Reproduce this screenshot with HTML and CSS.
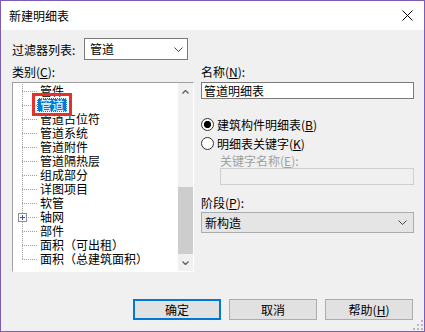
FILE: index.html
```html
<!DOCTYPE html>
<html lang="zh-CN">
<head>
    <meta charset="UTF-8">
    <title>新建明细表</title>
    <link rel="stylesheet" href="styles.css">
</head>
<body>
    <div class="dialog">
        <div class="titlebar">
            <span class="title">新建明细表</span>
            <svg class="close" width="11" height="11" viewBox="0 0 11 11">
                <path d="M0.5 0.5 L10.5 10.5 M10.5 0.5 L0.5 10.5" stroke="#000" stroke-width="1" fill="none"/>
            </svg>
        </div>

        <div class="content">
            <div class="filter-row">
                <span class="filter-label">过滤器列表:</span>
                <div class="select filter-select">
                    <span>管道</span>
                    <svg class="chevron" width="9" height="5" viewBox="0 0 9 5"><path d="M0.5 0.5 L4.5 4.5 L8.5 0.5" stroke="#444" fill="none"/></svg>
                </div>
            </div>

            <div class="main">
                <div class="left">
                    <div class="field-label">类别(<u>C</u>):</div>
                    <div class="listbox">
                        <ul class="tree">
                            <li class="row"><span class="branch"></span><span class="item">管件</span></li>
                            <li class="row"><span class="branch"></span><span class="item selected">管道</span></li>
                            <li class="row"><span class="branch"></span><span class="item">管道占位符</span></li>
                            <li class="row"><span class="branch"></span><span class="item">管道系统</span></li>
                            <li class="row"><span class="branch"></span><span class="item">管道附件</span></li>
                            <li class="row"><span class="branch"></span><span class="item">管道隔热层</span></li>
                            <li class="row"><span class="branch"></span><span class="item">组成部分</span></li>
                            <li class="row"><span class="branch"></span><span class="item">详图项目</span></li>
                            <li class="row"><span class="branch"></span><span class="item">软管</span></li>
                            <li class="row">
                                <span class="branch">
                                    <span class="plus"><svg width="7" height="7" viewBox="0 0 7 7"><path d="M1 3.5 H6 M3.5 1 V6" stroke="#2b5cad" fill="none"/></svg></span>
                                </span>
                                <span class="item">轴网</span>
                            </li>
                            <li class="row"><span class="branch"></span><span class="item">部件</span></li>
                            <li class="row"><span class="branch"></span><span class="item">面积（可出租）</span></li>
                            <li class="row last"><span class="branch"></span><span class="item">面积（总建筑面积）</span></li>
                        </ul>
                        <div class="scrollbar">
                            <div class="sb-btn">
                                <svg width="7" height="4" viewBox="0 0 7 4"><path d="M0.5 3.5 L3.5 0.5 L6.5 3.5" stroke="#606060" stroke-width="1.4" fill="none"/></svg>
                            </div>
                            <div class="sb-track"><div class="sb-thumb"></div></div>
                            <div class="sb-btn">
                                <svg width="7" height="4" viewBox="0 0 7 4"><path d="M0.5 0.5 L3.5 3.5 L6.5 0.5" stroke="#606060" stroke-width="1.4" fill="none"/></svg>
                            </div>
                        </div>
                    </div>
                </div>

                <div class="right">
                    <div class="field-label">名称(<u>N</u>):</div>
                    <div class="text-input">管道明细表</div>

                    <div class="radios">
                        <div class="radio-row">
                            <span class="radio checked"></span>
                            <span>建筑构件明细表(<u>B</u>)</span>
                        </div>
                        <div class="radio-row">
                            <span class="radio"></span>
                            <span>明细表关键字(<u>K</u>)</span>
                        </div>
                    </div>

                    <div class="keyword">
                        <div class="field-label disabled">关键字名称(<u>E</u>):</div>
                        <div class="text-input disabled-input"></div>
                    </div>

                    <div class="field-label phase-label">阶段(<u>P</u>):</div>
                    <div class="select phase-select">
                        <span>新构造</span>
                        <svg class="chevron" width="9" height="5" viewBox="0 0 9 5"><path d="M0.5 0.5 L4.5 4.5 L8.5 0.5" stroke="#444" fill="none"/></svg>
                    </div>
                </div>
            </div>

            <div class="buttons">
                <button class="btn default">确定</button>
                <button class="btn">取消</button>
                <button class="btn">帮助(<u>H</u>)</button>
            </div>
        </div>

        <svg class="grip" width="10" height="10" viewBox="0 0 10 10">
            <rect x="8" y="0" width="2" height="2" fill="#b8b8b8"/>
            <rect x="8" y="4" width="2" height="2" fill="#b8b8b8"/>
            <rect x="4" y="4" width="2" height="2" fill="#b8b8b8"/>
            <rect x="8" y="8" width="2" height="2" fill="#b8b8b8"/>
            <rect x="4" y="8" width="2" height="2" fill="#b8b8b8"/>
            <rect x="0" y="8" width="2" height="2" fill="#b8b8b8"/>
        </svg>
    </div>
</body>
</html>
```

FILE: styles.css
```css
* {
    box-sizing: border-box;
}

body {
    margin: 0;
    font-family: "Noto Sans CJK SC", "Liberation Sans", sans-serif;
    font-size: 12px;
    color: #000;
    background: #f0f0f0;
}

u {
    text-decoration: underline;
    text-underline-offset: 1px;
}

.dialog {
    position: relative;
    width: 425px;
    height: 332px;
    border: 1px solid #7d5db3;
    background: #f0f0f0;
}

/* title bar */
.titlebar {
    height: 29px;
    background: #fff;
    display: flex;
    align-items: center;
    justify-content: space-between;
    padding: 0 11px 0 8px;
}

.title {
    line-height: 14px;
}

.close {
    display: block;
}

/* body */
.content {
    padding: 8px 10px 0 11px;
}

.filter-row {
    display: flex;
    align-items: center;
    height: 22px;
}

.filter-label {
    width: 72px;
    flex: none;
}

.select {
    display: flex;
    align-items: center;
    justify-content: space-between;
    line-height: 14px;
}

.filter-select {
    width: 104px;
    height: 22px;
    background: #fff;
    border: 1px solid #7a7a7a;
    padding: 0 4px 0 5px;
}

.chevron {
    display: block;
}

.main {
    display: flex;
    gap: 7px;
    margin-top: 5px;
}

.left {
    width: 182px;
    flex: none;
}

.right {
    width: 213px;
    flex: none;
}

.field-label {
    line-height: 14px;
    height: 14px;
    margin-bottom: 3px;
    white-space: nowrap;
}

/* category list */
.listbox {
    height: 190px;
    display: flex;
    border: 1px solid;
    border-color: #a0a0a0 #fff #fff #a0a0a0;
    background: #fff;
}

.tree {
    flex: 1;
    list-style: none;
    margin: 0;
    padding: 1px 0 0 0;
    overflow: hidden;
}

.row {
    display: flex;
    align-items: center;
    height: 14px;
    line-height: 14px;
    white-space: nowrap;
}

.branch {
    position: relative;
    flex: none;
    width: 15px;
    height: 14px;
    margin-left: 9px;
    background-image:
        linear-gradient(to bottom, #a0a0a0 50%, transparent 50%),
        linear-gradient(to right, #a0a0a0 50%, transparent 50%);
    background-size: 1px 2px, 2px 1px;
    background-position: 0 0, 0 7px;
    background-repeat: repeat-y, repeat-x;
}

.last .branch {
    background-image:
        linear-gradient(#fff, #fff),
        linear-gradient(to bottom, #a0a0a0 50%, transparent 50%),
        linear-gradient(to right, #a0a0a0 50%, transparent 50%);
    background-size: 1px 6px, 1px 2px, 2px 1px;
    background-position: 0 8px, 0 0, 0 7px;
    background-repeat: no-repeat, repeat-y, repeat-x;
}

.plus {
    position: absolute;
    left: -4px;
    top: 3px;
    width: 9px;
    height: 9px;
    border: 1px solid #8f8f8f;
    background: #fff;
}

.plus svg {
    display: block;
}

.item {
    padding: 0 3px;
    height: 14px;
}

.item.selected {
    position: relative;
    background: #0078d7;
    color: #fff;
    outline: 1px dotted #fff;
    outline-offset: -1px;
}

.item.selected::after {
    content: "";
    position: absolute;
    left: -5px;
    right: -5px;
    top: -5px;
    bottom: -4px;
    border: 3px solid #e3312c;
}

.scrollbar {
    width: 15px;
    flex: none;
    display: flex;
    flex-direction: column;
    background: #f0f0f0;
}

.sb-btn {
    height: 17px;
    display: flex;
    align-items: center;
    justify-content: center;
}

.sb-btn svg {
    display: block;
}

.sb-track {
    flex: 1;
}

.sb-thumb {
    margin-top: 87px;
    height: 67px;
    background: #cdcdcd;
}

/* right side */
.text-input {
    height: 17px;
    border: 1px solid #7a7a7a;
    background: #fff;
    padding-left: 2px;
    line-height: 15px;
}

.radios {
    margin-top: 16px;
}

.radio-row {
    display: flex;
    align-items: center;
    height: 19px;
    line-height: 14px;
}

.radio {
    width: 13px;
    height: 13px;
    border: 1px solid #333;
    border-radius: 50%;
    background: #fff;
    margin-right: 3px;
    flex: none;
}

.radio.checked {
    background: radial-gradient(circle, #000 0, #000 3.3px, #fff 3.9px);
}

.keyword {
    padding-left: 19px;
}

.keyword .field-label {
    margin-top: 1px;
    margin-bottom: 0;
}

.disabled {
    color: #a0a0a0;
}

.disabled-input {
    background: #f0f0f0;
    border-color: #cfcfcf;
}

.phase-label {
    margin-top: 11px;
    margin-bottom: 2px;
}

.phase-select {
    height: 21px;
    background: #e5e5e5;
    border: 1px solid #acacac;
    padding: 0 6px 0 3px;
}

/* bottom buttons */
.buttons {
    display: flex;
    justify-content: flex-end;
    gap: 8px;
    margin-top: 27px;
    margin-right: 1px;
}

.btn {
    width: 88px;
    height: 21px;
    padding: 0;
    font-family: inherit;
    font-size: 12px;
    line-height: 14px;
    color: #000;
    background: #e1e1e1;
    border: 1px solid #adadad;
}

.btn.default {
    border: 2px solid #0078d7;
}

.grip {
    position: absolute;
    right: 1px;
    bottom: 1px;
}
```
